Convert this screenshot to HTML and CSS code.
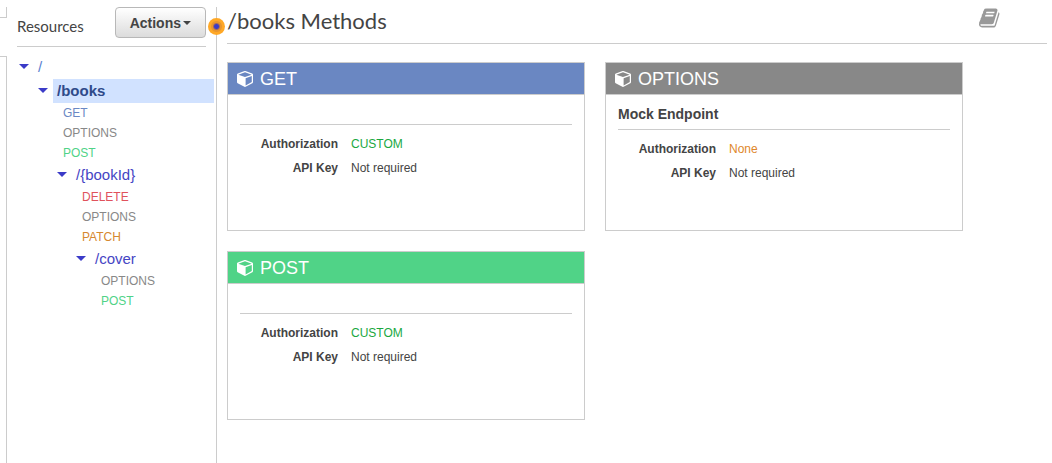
FILE: index.html
```html
<!DOCTYPE html>
<html lang="en">
<head>
<meta charset="utf-8">
<title>/books Methods</title>
<link rel="stylesheet" href="styles.css">
</head>
<body>
<svg class="sprite" aria-hidden="true">
  <symbol id="cube" viewBox="0 128 1664 1664"><path d="M896 1629l640-349v-636l-640 233v752zm-64-865l698-254-698-254-698 254zm832-252v768q0 35-18 65t-49 47l-704 384q-28 16-61 16t-61-16l-704-384q-31-17-49-47t-18-65v-768q0-40 23-73t61-47l704-256q22-8 44-8t44 8l704 256q38 14 61 47t23 73z"/></symbol>
</svg>
<div class="app">
  <div class="rail">
    <div class="rail-top"></div>
    <div class="rail-body"></div>
  </div>
  <aside class="sidebar">
    <div class="sidebar-head">
      <h2 class="sidebar-title">Resources</h2>
      <button class="actions" type="button">Actions<span class="actions-caret"></span></button>
    </div>
    <span class="marker"></span>
    <ul class="tree">
      <li>
        <div class="node"><button class="toggle" type="button" aria-label="Collapse /"></button><a class="path root" href="#">/</a></div>
        <ul class="children">
          <li>
            <div class="node"><button class="toggle" type="button" aria-label="Collapse /books"></button><a class="path selected" href="#">/books</a></div>
            <ul class="methods">
              <li><a class="get" href="#">GET</a></li>
              <li><a class="options" href="#">OPTIONS</a></li>
              <li><a class="post" href="#">POST</a></li>
            </ul>
            <ul class="children">
              <li>
                <div class="node"><button class="toggle" type="button" aria-label="Collapse /{bookId}"></button><a class="path" href="#">/{bookId}</a></div>
                <ul class="methods">
                  <li><a class="delete" href="#">DELETE</a></li>
                  <li><a class="options" href="#">OPTIONS</a></li>
                  <li><a class="patch" href="#">PATCH</a></li>
                </ul>
                <ul class="children">
                  <li>
                    <div class="node"><button class="toggle" type="button" aria-label="Collapse /cover"></button><a class="path" href="#">/cover</a></div>
                    <ul class="methods">
                      <li><a class="options" href="#">OPTIONS</a></li>
                      <li><a class="post" href="#">POST</a></li>
                    </ul>
                  </li>
                </ul>
              </li>
            </ul>
          </li>
        </ul>
      </li>
    </ul>
  </aside>
  <main class="main">
    <header class="main-head">
      <h1 class="main-title">/books Methods</h1>
      <a class="docs" href="#" aria-label="Documentation"><svg class="docs-icon" viewBox="0 0 1792 1792"><path d="M1639 478q40 57 18 129l-275 906q-19 64-76.500 107.500t-122.500 43.500h-923q-77 0-148.500-53.500t-99.500-131.500q-24-67-2-127 0-4 3-27t4-37q1-8-3-21.500t-3-19.500q2-11 8-21t16.500-23.500 16.500-23.500q23-38 45-91.500t30-91.500q3-10 .5-30t-.5-28q3-11 17-28t17-23q21-36 42-92t25-90q1-9-2.500-32t.5-28q4-13 22-30.500t22-22.500q19-26 42.500-84.500t27.500-96.500q1-8-3-25.500t-2-26.500q2-8 9-18t18-23 17-21q8-12 16.500-30.500t15-35 16-36 19.500-32 26.500-23.500 36-11.500 47.500 5.500l-1 3q38-9 51-9h761q74 0 114 56t18 130l-274 906q-36 119-71.500 153.500t-128.500 34.500h-869q-27 0-38 15-11 16-1 43 24 70 144 70h923q29 0 56-15.500t35-41.500l300-987q7-22 5-57 38 15 59 43zm-1064 2q-4 13 2 22.500t20 9.500h608q13 0 25.500-9.500t16.500-22.500l21-64q4-13-2-22.500t-20-9.500h-608q-13 0-25.500 9.500t-16.500 22.500zm-83 256q-4 13 2 22.500t20 9.500h608q13 0 25.500-9.500t16.500-22.500l21-64q4-13-2-22.500t-20-9.500h-608q-13 0-25.500 9.500t-16.500 22.500z"/></svg></a>
    </header>
    <div class="cards">
      <section class="card">
        <h2 class="card-head get-bg"><svg class="cube"><use href="#cube"/></svg>GET</h2>
        <div class="card-body">
          <div class="endpoint"></div>
          <dl class="facts">
            <dt>Authorization</dt><dd class="custom">CUSTOM</dd>
            <dt>API Key</dt><dd>Not required</dd>
          </dl>
        </div>
      </section>
      <section class="card">
        <h2 class="card-head options-bg"><svg class="cube"><use href="#cube"/></svg>OPTIONS</h2>
        <div class="card-body">
          <div class="endpoint"><h3 class="endpoint-name">Mock Endpoint</h3></div>
          <dl class="facts">
            <dt>Authorization</dt><dd class="none">None</dd>
            <dt>API Key</dt><dd>Not required</dd>
          </dl>
        </div>
      </section>
      <section class="card">
        <h2 class="card-head post-bg"><svg class="cube"><use href="#cube"/></svg>POST</h2>
        <div class="card-body">
          <div class="endpoint"></div>
          <dl class="facts">
            <dt>Authorization</dt><dd class="custom">CUSTOM</dd>
            <dt>API Key</dt><dd>Not required</dd>
          </dl>
        </div>
      </section>
    </div>
  </main>
</div>
</body>
</html>
```
FILE: styles.css
```css
* { box-sizing: border-box; }

body {
  margin: 0;
  background: #fff;
  color: #444;
  font: 12px/20px "Liberation Sans", Arial, sans-serif;
}

h1, h2, h3, ul, dl, dd { margin: 0; padding: 0; }
ul { list-style: none; }
a { text-decoration: none; }
.sprite { display: none; }

.app {
  display: flex;
  min-height: 100vh;
  padding-top: 7px;
}

/* Collapsed navigation edge */
.rail {
  display: flex;
  flex-direction: column;
  gap: 38px;
  width: 7px;
}
.rail-top {
  height: 11px;
  border: solid #ccc;
  border-width: 0 1px 1px 0;
}
.rail-body {
  flex: 1;
  border: solid #ccc;
  border-width: 1px 1px 0 0;
}

/* Resource tree */
.sidebar {
  position: relative;
  width: 210px;
  border-right: 1px solid #ccc;
}
.sidebar-head {
  display: flex;
  justify-content: space-between;
  align-items: flex-start;
  height: 40px;
  margin: 0 10px;
  border-bottom: 1px solid #ccc;
}
.sidebar-title {
  font: 15px/38px Lato, sans-serif;
}
.actions {
  display: flex;
  align-items: center;
  gap: 2px;
  height: 31px;
  padding: 0 14px;
  border: 1px solid #b8b8b8;
  border-radius: 4px;
  background: linear-gradient(#fff, #dcdcdc);
  color: #444;
  font: bold 14px "Liberation Sans", Arial, sans-serif;
}
.actions-caret {
  border: 4px solid transparent;
  border-top-color: #444;
  border-bottom: 0;
}
.marker {
  position: absolute;
  top: 11px;
  right: -9px;
  width: 17px;
  height: 17px;
  border-radius: 50%;
  background: radial-gradient(circle, #3b3bc8 2px, #a06a60 3px, #e8952e 4px, #e8952e 5px, #ffa826 6px);
}
.tree { padding: 8px 2px 0 12px; }
.children { padding-left: 19px; }
.node { display: flex; }
.toggle {
  display: flex;
  align-items: center;
  width: 15px;
  padding: 0 0 1px;
  border: 0;
  background: none;
}
.toggle::before {
  content: "";
  border: 5px solid transparent;
  border-top-color: #3b3bc8;
  border-bottom: 0;
}
.path {
  flex: 1;
  padding: 0 4px;
  color: #4545c4;
  font-size: 15px;
  line-height: 24px;
}
.root { color: #5a7fd0; }
.selected {
  background: #d1e2ff;
  color: #2f4a8a;
  font-weight: bold;
}
.methods { padding-left: 25px; }
.get { color: #6b88c4; }
.options { color: #888; }
.post { color: #50d387; }
.delete { color: #e0525c; }
.patch { color: #d6882f; }

/* Methods pane */
.main {
  flex: 1;
  min-width: 0;
  padding: 0 5px 20px 10px;
}
.main-head {
  display: flex;
  justify-content: space-between;
  align-items: flex-start;
  height: 37px;
  padding-right: 46px;
  border-bottom: 1px solid #ccc;
}
.main-title {
  font: 22px/28px Lato, sans-serif;
}
.docs-icon {
  display: block;
  width: 22px;
  height: 22px;
  fill: #999;
}
.cards {
  display: grid;
  grid-template-columns: repeat(auto-fill, 358px);
  gap: 20px;
  padding-top: 18px;
}
.card {
  min-height: 169px;
  border: 1px solid #ccc;
}
.card-head {
  display: flex;
  align-items: flex-start;
  gap: 7px;
  padding: 1px 9px 0;
  border-bottom: 1px solid #ccc;
  color: #fff;
  font-size: 18px;
  font-weight: normal;
  line-height: 30px;
}
.cube {
  width: 16px;
  height: 16px;
  margin-top: 7px;
  fill: #fff;
}
.get-bg { background: #6a87c2; }
.options-bg { background: #888; }
.post-bg { background: #50d387; }
.card-body { padding: 0 12px; }
.endpoint {
  min-height: 30px;
  border-bottom: 1px solid #ccc;
}
.endpoint-name {
  padding: 9px 0 5px;
  font-size: 14px;
  line-height: 20px;
}
.facts {
  display: grid;
  grid-template-columns: 98px 1fr;
  column-gap: 13px;
  padding: 7px 0;
  line-height: 24px;
}
.facts dt {
  font-weight: bold;
  text-align: right;
}
.custom { color: #1ba83f; }
.none { color: #e0882a; }
```
